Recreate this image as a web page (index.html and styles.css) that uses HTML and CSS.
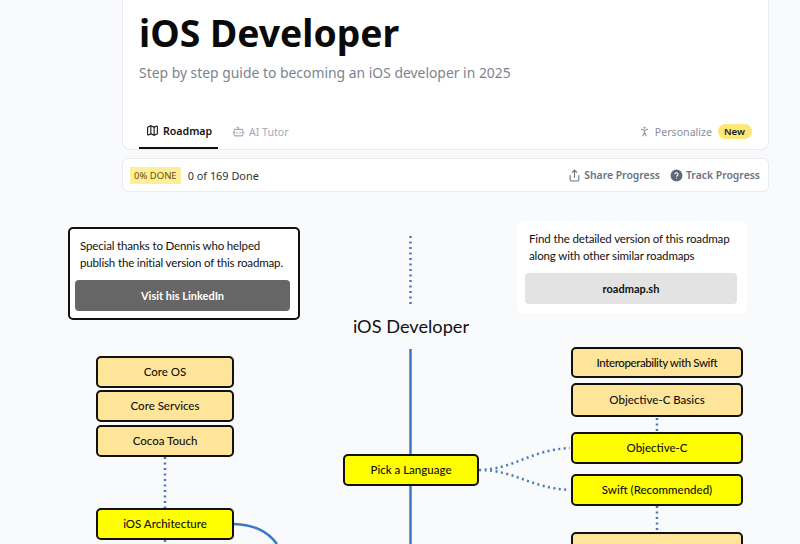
FILE: index.html
```html
<!DOCTYPE html>
<html lang="en">
<head>
    <meta charset="UTF-8">
    <meta name="viewport" content="width=device-width, initial-scale=1.0">
    <title>iOS Developer Roadmap</title>
    <link rel="stylesheet" href="styles.css">
</head>
<body>
    <div class="container">
        <div class="hero">
            <h1>iOS Developer</h1>
            <p class="subtitle">Step by step guide to becoming an iOS developer in 2025</p>
            <div class="tabs">
                <a class="tab active">
                    <svg class="icon" viewBox="0 0 24 24"><path d="M14.1 5.6a2 2 0 0 0 1.8 0l3.7-1.8a1 1 0 0 1 1.4.9v12.7a1 1 0 0 1-.6.9l-4.5 2.2a2 2 0 0 1-1.8 0l-4.2-2.1a2 2 0 0 0-1.8 0l-3.7 1.8a1 1 0 0 1-1.4-.9V6.6a1 1 0 0 1 .6-.9l4.5-2.2a2 2 0 0 1 1.8 0z"/><path d="M15 5.8v15M9 3.2v15"/></svg>
                    Roadmap
                </a>
                <a class="tab muted">
                    <svg class="icon" viewBox="0 0 24 24"><path d="M12 8V4H9"/><rect x="4" y="8" width="16" height="12" rx="2"/><path d="M2 14h2M20 14h2M15 13v2M9 13v2"/></svg>
                    AI Tutor
                </a>
                <div class="personalize">
                    <svg class="icon" viewBox="0 0 24 24"><circle cx="12" cy="5" r="1"/><path d="m9 20 3-6 3 6M6 8l6 2 6-2M12 10v4"/></svg>
                    Personalize
                    <span class="new-badge">New</span>
                </div>
            </div>
        </div>
        <div class="progress-bar">
            <span class="done-badge">0% DONE</span>
            <span class="done-count">0 of 169 Done</span>
            <div class="progress-actions">
                <a class="action">
                    <svg class="icon" viewBox="0 0 24 24"><path d="M4 12v8a2 2 0 0 0 2 2h12a2 2 0 0 0 2-2v-8M16 6l-4-4-4 4M12 2v13"/></svg>
                    Share Progress
                </a>
                <a class="action">
                    <svg class="icon" viewBox="0 0 24 24"><circle class="solid" cx="12" cy="12" r="10"/><path class="cut" d="M9.1 9a3 3 0 0 1 5.8 1c0 2-2.9 2.6-2.9 3.5M12 17h.01"/></svg>
                    Track Progress
                </a>
            </div>
        </div>

        <div class="canvas">
            <svg class="lines" width="800" height="344" viewBox="0 200 800 344">
                <path class="line dots" d="M410.5 236V304"/>
                <path class="line" d="M410.5 349V544"/>
                <path class="line dots" d="M165 457V508M165 540V544"/>
                <path class="line" d="M234 524C256 525 268 532 277 544"/>
                <path class="line dots" d="M657 418V432M657 506V531"/>
                <path class="line dots" d="M479 470C515 469 530 450 570 448M479 470C515 470 530 488 570 490"/>
            </svg>

            <div class="note note-left">
                <p>Special thanks to Dennis who helped<br>publish the initial version of this roadmap.</p>
                <a class="note-btn dark">Visit his LinkedIn</a>
            </div>
            <div class="note note-right">
                <p>Find the detailed version of this roadmap<br>along with other similar roadmaps</p>
                <a class="note-btn light">roadmap.sh</a>
            </div>
            <div class="map-title">iOS Developer</div>

            <div class="node sub n-coreos">Core OS</div>
            <div class="node sub n-services">Core Services</div>
            <div class="node sub n-cocoa">Cocoa Touch</div>
            <div class="node n-arch">iOS Architecture</div>
            <div class="node n-pick">Pick a Language</div>
            <div class="node sub n-interop">Interoperability with Swift</div>
            <div class="node sub n-basics">Objective-C Basics</div>
            <div class="node n-objc">Objective-C</div>
            <div class="node n-swift">Swift (Recommended)</div>
            <div class="node sub n-next"></div>
        </div>
    </div>
</body>
</html>
```

FILE: styles.css
```css
html, body {
    height: 544px;
    overflow: hidden;
}
body {
    font-family: "Noto Sans", Arial, sans-serif;
    margin: 0;
    background-color: #f9fafc;
    color: #111;
}
.container {
    width: 800px;
}
.hero {
    box-sizing: border-box;
    width: 647px;
    height: 150px;
    margin-left: 122px;
    padding: 9px 16px 0 16px;
    background-color: white;
    border: 1px solid #e9ebef;
    border-top: none;
    border-radius: 0 0 8px 8px;
    display: flex;
    flex-direction: column;
}
h1 {
    margin: 0;
    font-size: 37.3px;
    line-height: 48px;
    font-weight: 700;
    color: #0a0a0a;
}
.subtitle {
    margin: 4px 0 0;
    font-size: 13.9px;
    line-height: 24px;
    color: #7c8390;
}
.tabs {
    margin-top: auto;
    display: flex;
    align-items: center;
    height: 35px;
    font-size: 10.6px;
}
.tab {
    display: flex;
    align-items: center;
    gap: 4px;
    height: 35px;
    box-sizing: border-box;
    padding: 0 7px;
}
.tab.active {
    font-weight: 600;
    border-bottom: 2px solid #111;
    width: 79px;
}
.tab.muted {
    color: #a4a9b3;
    margin-left: 7px;
}
.icon {
    width: 13px;
    height: 13px;
    fill: none;
    stroke: currentColor;
    stroke-width: 2;
    stroke-linecap: round;
    stroke-linejoin: round;
    flex-shrink: 0;
}
.personalize {
    margin-left: auto;
    display: flex;
    align-items: center;
    gap: 4px;
    color: #8a909c;
}
.new-badge {
    margin-left: 2px;
    padding: 1px 7px 1px 6px;
    border-radius: 9px;
    background-color: #fde777;
    color: #1a1a1a;
    font-size: 9.6px;
    font-weight: 600;
}
.progress-bar {
    box-sizing: border-box;
    width: 647px;
    height: 34px;
    margin: 8px 0 0 122px;
    padding: 0 8px 0 7px;
    background-color: white;
    border: 1px solid #e9ebef;
    border-radius: 6px;
    display: flex;
    align-items: center;
    font-size: 10.9px;
}
.done-badge {
    padding: 2px 4px;
    background-color: #fdee99;
    color: #6b4f0c;
    font-size: 9.5px;
}
.done-count {
    margin-left: 7px;
    color: #333;
}
.progress-actions {
    margin-left: auto;
    display: flex;
    gap: 10px;
    color: #6b7280;
    font-weight: 600;
    font-size: 10.4px;
}
.action {
    display: flex;
    align-items: center;
    gap: 3px;
}
.solid {
    fill: #5f6675;
    stroke: #5f6675;
}
.cut {
    stroke: white;
}
.canvas {
    position: absolute;
    left: 0;
    top: 200px;
    width: 800px;
    height: 344px;
    font-family: Lato, "Noto Sans", sans-serif;
    font-size: 11.5px;
    color: #111;
}
.lines {
    position: absolute;
    left: 0;
    top: 0;
    fill: none;
}
.line {
    stroke: #3b78c4;
    stroke-width: 2.5;
}
.dots {
    stroke-width: 2.5;
    stroke-dasharray: 2 3.5;
    stroke: #4a78b8;
}
.note {
    position: absolute;
    box-sizing: border-box;
    background-color: white;
    border-radius: 5px;
}
.note p {
    margin: 0;
    font-size: 11.5px;
    white-space: nowrap;
}
.note-left {
    left: 68px;
    top: 27px;
    width: 232px;
    height: 93px;
    padding: 8px 8px 0 10px;
    border: 2px solid #111;
}
.note-left p {
    line-height: 17px;
    letter-spacing: -0.15px;
}
.note-right {
    left: 517px;
    top: 21px;
    width: 230px;
    height: 92px;
    padding: 10px 10px 0 12px;
}
.note-right p {
    line-height: 16.5px;
    letter-spacing: -0.13px;
}
.note-btn {
    display: flex;
    align-items: center;
    justify-content: center;
    height: 31px;
    border-radius: 4px;
    margin-top: 9px;
    font-size: 11px;
}
.note-left .note-btn {
    margin-left: -5px;
}
.note-right .note-btn {
    margin-left: -4px;
}
.dark {
    background-color: #666;
    color: white;
    font-weight: 700;
}
.light {
    background-color: #e3e3e3;
    font-weight: 700;
}
.map-title {
    position: absolute;
    left: 311px;
    top: 114px;
    width: 200px;
    text-align: center;
    font-size: 18.2px;
    line-height: 24px;
}
.node {
    position: absolute;
    box-sizing: border-box;
    display: flex;
    align-items: center;
    justify-content: center;
    padding-bottom: 1px;
    background-color: #ffff00;
    border: 2px solid #111;
    border-radius: 5px;
    font-weight: 500;
}
.node.sub {
    background-color: #ffe599;
}
.n-coreos { left: 96px; top: 156px; width: 138px; height: 32px; }
.n-services { left: 96px; top: 190px; width: 138px; height: 32px; }
.n-cocoa { left: 96px; top: 225px; width: 138px; height: 32px; }
.n-arch { left: 96px; top: 308px; width: 138px; height: 32px; }
.n-pick { left: 343px; top: 254px; width: 136px; height: 32px; }
.n-interop { left: 571px; top: 147px; width: 172px; height: 31px; letter-spacing: -0.4px; }
.n-basics { left: 571px; top: 183px; width: 172px; height: 34px; }
.n-objc { left: 571px; top: 232px; width: 172px; height: 32px; }
.n-swift { left: 571px; top: 274px; width: 172px; height: 32px; }
.n-next { left: 571px; top: 332px; width: 172px; height: 32px; }
```
